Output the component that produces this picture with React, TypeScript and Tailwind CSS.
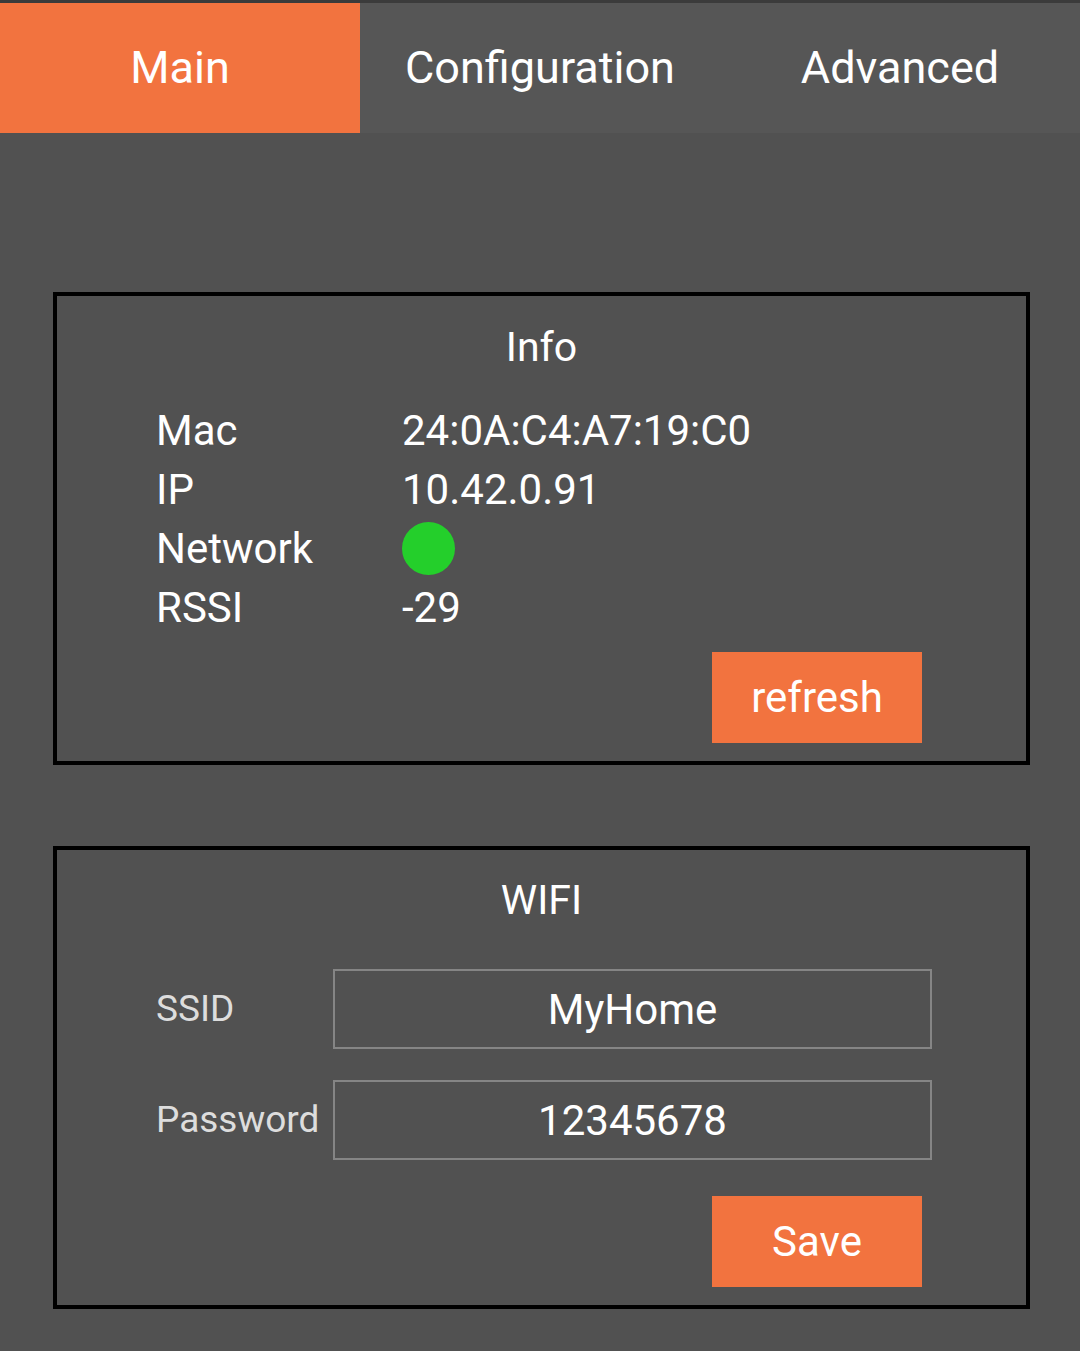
import { useState } from "react";

const tabs = ["Main", "Configuration", "Advanced"];

function InfoRow({ label, children }: { label: string; children: React.ReactNode }) {
  return (
    <div className="flex h-[59px] items-center">
      <div className="w-[246px] shrink-0">{label}</div>
      <div>{children}</div>
    </div>
  );
}

export default function App() {
  const [tab, setTab] = useState(0);
  const [ssid, setSsid] = useState("MyHome");
  const [pass, setPass] = useState("12345678");

  return (
    <div className="min-h-[1351px] bg-[#515151] font-['Roboto',sans-serif] text-white">
      <div className="h-[3px] bg-[#3b3b3b]" />
      <div className="grid grid-cols-3 bg-[#565656]">
        {tabs.map((t, i) => (
          <button
            key={t}
            onClick={() => setTab(i)}
            className={
              "h-[130px] text-[45px] " + (tab === i ? "bg-[#f2733f]" : "")
            }
          >
            {t}
          </button>
        ))}
      </div>

      <div className="pl-[53px] pr-[50px] pt-[159px]">
        <div className="h-[473px] border-4 border-black pt-[21px]">
          <h2 className="text-center text-[41px] leading-[60px]">Info</h2>
          <div className="mt-[24px] pl-[99px] text-[42px]">
            <InfoRow label="Mac">24:0A:C4:A7:19:C0</InfoRow>
            <InfoRow label="IP">10.42.0.91</InfoRow>
            <InfoRow label="Network">
              <div className="h-[53px] w-[53px] rounded-full bg-[#24cf2b]" />
            </InfoRow>
            <InfoRow label="RSSI">-29</InfoRow>
          </div>
          <div className="mt-[15px] flex justify-end pr-[104px]">
            <button className="h-[91px] w-[210px] bg-[#f2733f] text-[42px]">
              refresh
            </button>
          </div>
        </div>

        <div className="mt-[81px] h-[463px] border-4 border-black pt-[20px]">
          <h2 className="text-center text-[41px] leading-[60px]">WIFI</h2>
          <div className="mt-[39px] space-y-[31px] pl-[99px] pr-[94px]">
            <div className="flex items-center">
              <label className="w-[177px] shrink-0 text-[37px] text-[#dddddd]">SSID</label>
              <input
                value={ssid}
                onChange={(e) => setSsid(e.target.value)}
                className="h-[80px] flex-1 border-2 border-[#858585] bg-transparent text-center text-[42px] outline-none"
              />
            </div>
            <div className="flex items-center">
              <label className="w-[177px] shrink-0 text-[37px] text-[#dddddd]">Password</label>
              <input
                value={pass}
                onChange={(e) => setPass(e.target.value)}
                className="h-[80px] flex-1 border-2 border-[#858585] bg-transparent text-center text-[42px] outline-none"
              />
            </div>
          </div>
          <div className="mt-[36px] flex justify-end pr-[104px]">
            <button className="h-[91px] w-[210px] bg-[#f2733f] text-[42px]">Save</button>
          </div>
        </div>
      </div>
    </div>
  );
}
